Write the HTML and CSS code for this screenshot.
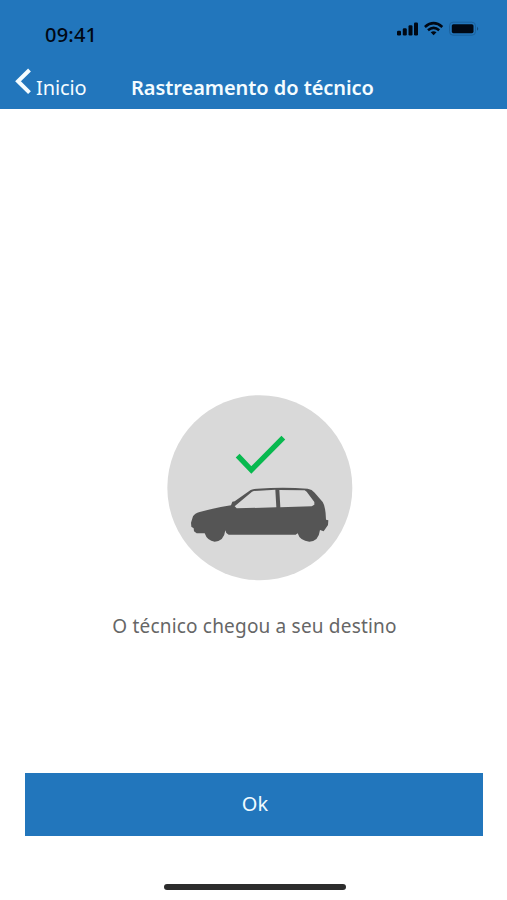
FILE: index.html
```html
<!DOCTYPE html>
<html lang="pt-BR">
<head>
<meta charset="utf-8">
<meta name="viewport" content="width=device-width, initial-scale=1">
<title>Rastreamento do técnico</title>
<link rel="stylesheet" href="styles.css">
</head>
<body>
<div class="screen">
  <header class="header">
    <div class="status">
      <span class="time">09:41</span>
      <svg class="indicators" viewBox="0 0 84 16" aria-hidden="true">
        <g>
          <rect x="1" y="9.7" width="4" height="4.8" rx="1.2"/>
          <rect x="6.8" y="7.3" width="4" height="7.2" rx="1.2"/>
          <rect x="12.5" y="4.3" width="4" height="10.2" rx="1.2"/>
          <rect x="18" y="1.4" width="4" height="13.1" rx="1.2"/>
        </g>
        <g fill="none" stroke="#000814" stroke-width="2.6">
          <path d="M28.9 5.9Q37.6-1.5 46.3 5.9"/>
          <path d="M32 9.2Q37.6 4.6 43.2 9.2"/>
        </g>
        <path d="M34.7 11.3Q37.6 9.2 40.5 11.3L37.6 14.3Z"/>
        <rect x="53.5" y="1.2" width="26" height="13" rx="3.6" fill="none" stroke="#1b619d" stroke-width="1"/>
        <rect x="55.8" y="3.2" width="21.7" height="9" rx="1.6"/>
        <path d="M81 5.7Q83.5 7.7 81 9.7Z" fill="#164f80"/>
      </svg>
    </div>
    <nav class="nav">
      <a class="back">
        <svg class="chevron" viewBox="0 0 16 27" aria-hidden="true"><path d="M14.5 2L3 13.3L14.5 24.6"/></svg>
        <span class="back-label">Inicio</span>
      </a>
      <h1 class="title">Rastreamento do técnico</h1>
    </nav>
  </header>
  <main class="content">
    <svg class="arrival" viewBox="21 29 558 558" aria-hidden="true">
      <circle cx="299.5" cy="307" r="277.5" fill="#d9d9d9"/>
      <path d="M233 211L274 254L370 157" fill="none" stroke="#08b94f" stroke-width="16"/>
      <path fill="#555" fill-rule="evenodd" d="M93 412L99 393Q104 384 119 380Q160 368 213 360L217 349L224 348L272 314Q280 310 292 310Q370 304 443 310Q456 312 464 322L488 350Q497 363 498 403L505 405L504 419L491 438L480 434Q476 468 448 469Q420 467 413 444L407 448H206L199 443L196 435Q192 468 164 469Q142 467 134 444H110L102 438L101 429L94 424Z
        M224 363L276 319Q283 316 296 316L346 313L349 366L230 369Z
        M358 314L434 315L440 319L463 350V358L455 363L361 366Z"/>
    </svg>
    <p class="message">O técnico chegou a seu destino</p>
  </main>
  <button class="ok" type="button">Ok</button>
  <div class="home-bar"></div>
</div>
</body>
</html>
```
FILE: styles.css
```css
* { box-sizing: border-box; }
body {
  margin: 0;
  background: #fff;
  font-family: "Noto Sans", "Open Sans", sans-serif;
}
.screen {
  display: flex;
  flex-direction: column;
  align-items: center;
  width: 507px;
  height: 900px;
  overflow: hidden;
}
.header {
  width: 100%;
  height: 108.5px;
  background: #2276bc;
}
.status {
  display: flex;
  justify-content: space-between;
  height: 66px;
  padding: 21px 27px 0 45px;
}
.time {
  color: #000814;
  font-size: 20px;
  font-weight: 500;
  line-height: 27px;
  letter-spacing: 0.2px;
}
.indicators {
  width: 84px;
  height: 16px;
  fill: #000814;
}
.nav {
  display: flex;
  padding-left: 15px;
  color: #f4fcff;
}
.back {
  display: flex;
  width: 116px;
  gap: 5px;
}
.chevron {
  width: 16px;
  height: 27px;
  margin-top: 2px;
  fill: none;
  stroke: currentColor;
  stroke-width: 4;
}
.back-label {
  margin-top: 8px;
  font-size: 20px;
  line-height: 27px;
  letter-spacing: -0.1px;
}
.title {
  margin: 8px 0 0;
  font-size: 20px;
  font-weight: 600;
  line-height: 27px;
  letter-spacing: -0.06px;
  white-space: nowrap;
}
.content {
  display: flex;
  flex: 1;
  flex-direction: column;
  align-items: center;
  padding-top: 286px;
}
.arrival {
  width: 186px;
  height: 186px;
  margin-left: 13px;
}
.message {
  margin: 32px 0 0 2px;
  color: #666;
  font-size: 19px;
  line-height: 27px;
  letter-spacing: 0.19px;
  white-space: nowrap;
}
.ok {
  width: 458px;
  height: 62.5px;
  margin-right: -1px;
  padding: 0 0 2px 2px;
  border: 0;
  background: #2276bc;
  color: #effbff;
  font: 20px/27px "Noto Sans", "Open Sans", sans-serif;
}
.home-bar {
  width: 182px;
  height: 6px;
  margin: 48.5px 0 10px 2px;
  border-radius: 3px;
  background: #2c2c2c;
}
```
